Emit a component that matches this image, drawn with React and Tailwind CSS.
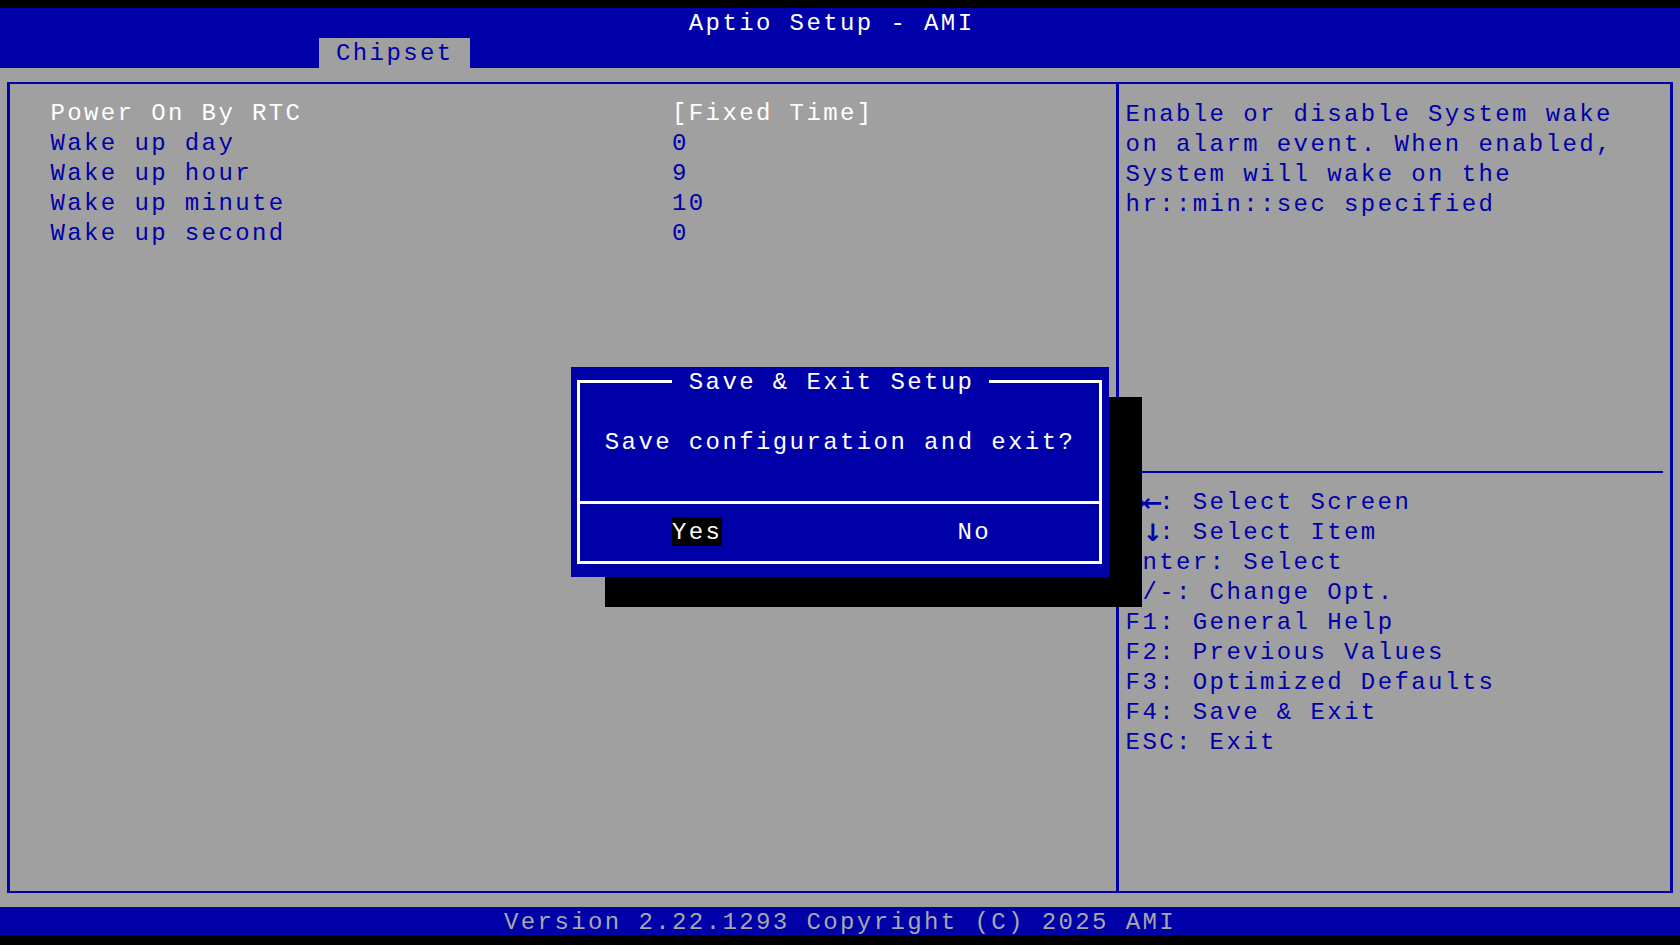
import React from 'react';

// Text-mode grid: 100 columns x 31 rows, each cell 16.8px wide and 30px tall
const settings = [
  { label: 'Power On By RTC', value: '[Fixed Time]', active: true },
  { label: 'Wake up day', value: '0' },
  { label: 'Wake up hour', value: '9' },
  { label: 'Wake up minute', value: '10' },
  { label: 'Wake up second', value: '0' },
];

const helpLines = [
  'Enable or disable System wake',
  'on alarm event. When enabled,',
  'System will wake on the',
  'hr::min::sec specified',
];

// arrow keys use a heavier glyph than the text font has
const keyHints = [
  { keys: ['→', '←'], text: ': Select Screen' },
  { keys: ['↑', '↓'], text: ': Select Item' },
  { text: 'Enter: Select' },
  { text: '+/-: Change Opt.' },
  { text: 'F1: General Help' },
  { text: 'F2: Previous Values' },
  { text: 'F3: Optimized Defaults' },
  { text: 'F4: Save & Exit' },
  { text: 'ESC: Exit' },
];

function SaveDialog() {
  return (
    <>
      {/* drop shadow, 2 columns right and 1 row down */}
      <div className="absolute left-[604.8px] top-[397px] w-[537.6px] h-[210px] bg-black" />
      <div className="absolute left-[571.2px] top-[367px] w-[537.6px] h-[210px] bg-[#0000a8] pt-[13px] pb-[13px] pl-[6px] pr-[6.6px]">
        <div className="h-full border-[3px] border-white flex flex-col text-white">
          <div className="-mt-[16px] h-[30px] pl-[91.8px]">
            <span className="inline-block h-[30px] bg-[#0000a8] pl-[16.8px] pr-[14.4px] pt-[1px]">
              Save &amp; Exit Setup
            </span>
          </div>
          <div className="mt-[30px] h-[30px] pl-[24.6px] pt-[1px]">Save configuration and exit?</div>
          <div className="mt-[30px] h-[30px] flex items-center">
            <div className="h-[3px] w-full bg-white" />
          </div>
          <div className="h-[30px] flex">
            <span className="ml-[91.8px] w-[50.4px] h-[29px] bg-black pt-[1px]">Yes</span>
            <span className="ml-[235.2px] pt-[1px]">No</span>
          </div>
        </div>
      </div>
    </>
  );
}

export default function App() {
  return (
    <div className="relative w-[1680px] h-[945px] overflow-hidden bg-black pt-[8px] pb-[10px] flex flex-col font-['Liberation_Mono','DejaVu_Sans_Mono',monospace] text-[24px] leading-[30px] tracking-[2.4px] whitespace-pre">
      {/* Title bar with screen tab */}
      <header className="h-[60px] bg-[#0000a8] flex flex-col shrink-0">
        <div className="h-[30px] pl-[688.8px] pt-[1px] text-white">Aptio Setup - AMI</div>
        <div className="h-[30px] flex">
          <div className="ml-[319.2px] w-[151.2px] h-[30px] bg-[#a0a0a0] text-[#0000a8] pl-[16.8px] pt-[1px]">Chipset</div>
        </div>
      </header>

      {/* Main area */}
      <main className="flex-1 bg-[#a0a0a0] px-[7px] pt-[14px] pb-[14px]">
        <div className="h-full flex border-[#0000a8] border-y-2 border-x-[3px]">
          <section className="w-[1109px] shrink-0 border-r-[3px] border-[#0000a8] pl-[40.4px] pt-[15px]">
            <div className="grid grid-cols-[621.6px_1fr]">
              {settings.map((s) => (
                <React.Fragment key={s.label}>
                  <div className={`h-[30px] ${s.active ? 'text-white' : 'text-[#0000a8]'}`}>{s.label}</div>
                  <div className={`h-[30px] ${s.active ? 'text-white' : 'text-[#0000a8]'}`}>{s.value}</div>
                </React.Fragment>
              ))}
            </div>
          </section>

          <aside className="flex-1 flex flex-col text-[#0000a8]">
            <div className="h-[387px] pl-[6.6px] pt-[16px]">
              {helpLines.map((line) => (
                <div key={line} className="h-[30px]">{line}</div>
              ))}
            </div>
            <div className="h-[2px] bg-[#0000a8] ml-[6.6px] mr-[7px]" />
            <div className="pl-[6.6px] pt-[15px]">
              {keyHints.map((hint) => (
                <div key={hint.text} className="h-[30px] flex">
                  {hint.keys &&
                    hint.keys.map((k) => (
                      <span
                        key={k}
                        className="inline-block w-[16.8px] text-center tracking-normal font-['DejaVu_Sans',sans-serif] font-bold"
                      >
                        {k}
                      </span>
                    ))}
                  <span>{hint.text}</span>
                </div>
              ))}
            </div>
          </aside>
        </div>
      </main>

      <footer className="h-[28px] shrink-0 bg-[#0000a8] text-[#a8a8a8] leading-[28px] pl-[504px] pt-[2px]">
        Version 2.22.1293 Copyright (C) 2025 AMI
      </footer>

      <SaveDialog />
    </div>
  );
}
